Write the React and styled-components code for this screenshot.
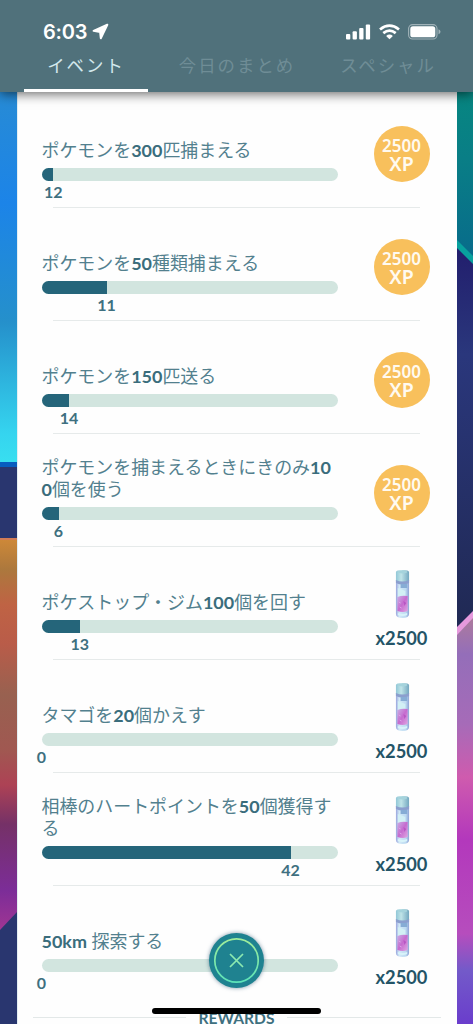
import React from 'react'
import styled, { createGlobalStyle } from 'styled-components'

const GlobalStyle = createGlobalStyle`
  * { box-sizing: border-box; }
  body {
    margin: 0;
    overflow: hidden;
    font-family: Lato, "Noto Sans CJK JP", sans-serif;
  }
`

const Screen = styled.div`
  position: relative;
  width: 473px;
  height: 1024px;
  overflow: hidden;
  display: flex;
  flex-direction: column;
`

const Header = styled.header`
  position: relative;
  z-index: 2;
  height: 92px;
  flex: none;
  background: #50717b;
  box-shadow: 0 2px 11px rgba(0, 0, 0, 0.6);
`

const StatusBar = styled.div`
  display: flex;
  align-items: center;
  height: 50px;
  padding: 13px 32px 0 43px;
  color: #fff;
`

const Time = styled.span`
  font: 600 20px/24px Inter, sans-serif;
  letter-spacing: -0.2px;
  margin-right: 5px;
`

const StatusIcons = styled.div`
  display: flex;
  align-items: center;
  gap: 8px;
  margin-left: auto;
`

const Tabs = styled.nav`
  display: flex;
  gap: 27px;
  height: 42px;
  padding-left: 24px;
`

const Tab = styled.div`
  width: 124px;
  text-align: center;
  font-size: 17.4px;
  line-height: 31px;
  letter-spacing: 2px;
  white-space: nowrap;
  font-weight: 400;
  color: ${props => props.$active ? '#d3e8ed' : '#6f8d96'};
  border-bottom: 3px solid ${props => props.$active ? '#fff' : 'transparent'};
`

const Body = styled.div`
  display: flex;
  flex: 1;
  min-height: 0;
`

const Side = styled.svg`
  display: block;
  flex: none;
`

const Card = styled.main`
  width: 440px;
  height: 932px;
  flex: none;
  padding-top: 3px;
  background: #fefefe;
  border-left: 1px solid #e3eef2;
`

const Task = styled.section`
  display: grid;
  grid-template-columns: 296px 110px;
  column-gap: 9px;
  height: 112px;
  padding-left: 24px;
`

const Info = styled.div`
  display: flex;
  flex-direction: column;
  justify-content: flex-end;
  padding-bottom: 5px;
`

const Title = styled.div`
  font-size: 17.95px;
  line-height: 22px;
  font-weight: 400;
  color: #52808e;
  margin-bottom: 7px;
  word-break: break-all;

  b {
    font-weight: 700;
    color: #3a6d7c;
  }
`

const Track = styled.div`
  height: 13px;
  border-radius: 7px;
  background: #d2e5df;
  overflow: hidden;
`

const Fill = styled.div`
  height: 100%;
  background: #25657a;
`

const Count = styled.div`
  width: 40px;
  height: 21px;
  text-align: center;
  font-size: 16px;
  line-height: 21px;
  font-weight: 700;
  color: #3e7080;
`

const Divider = styled.div`
  height: 1px;
  width: 367px;
  margin-left: 35px;
  background: #e6eaea;
`

const Reward = styled.div`
  display: flex;
  flex-direction: column;
  align-items: center;
`

const XpBadge = styled.div`
  width: 56px;
  height: 56px;
  margin-top: 31px;
  padding-top: 11px;
  border-radius: 50%;
  background: #f8c05c;
  color: #fffaf0;
  text-align: center;
  font-family: "Noto Sans", sans-serif;
  font-size: 17px;
  line-height: 18px;
  font-weight: 600;

  span {
    display: block;
    font-size: 19.5px;
    line-height: 17px;
  }
`

const Vial = styled.svg`
  display: block;
  margin-top: 22px;
  margin-left: 2px;
`

const Amount = styled.div`
  margin-top: 7px;
  font-size: 18.3px;
  line-height: 24px;
  font-weight: 700;
  color: #245467;
`

const RewardsHeading = styled.div`
  display: flex;
  align-items: center;
  gap: 13px;
  height: 22px;
  margin: 9px 16px 0 15px;
  font-size: 15.6px;
  font-weight: 700;
  color: #3e7080;

  &::before,
  &::after {
    content: '';
    flex: 1;
    height: 1px;
    margin-bottom: 1px;
    background: #e3e8e8;
  }
`

const CloseButton = styled.button`
  position: absolute;
  z-index: 3;
  left: 209px;
  top: 933px;
  width: 55px;
  height: 55px;
  padding: 0;
  border: 0;
  border-radius: 50%;
  background: #1f8290;
  box-shadow: 0 0 4px rgba(40, 80, 110, 0.6);

  svg {
    display: block;
  }
`

const HomeIndicator = styled.div`
  position: absolute;
  z-index: 4;
  left: 152px;
  top: 1008px;
  width: 169px;
  height: 6px;
  border-radius: 3px;
  background: #000;
`

const BAR_WIDTH = 296

const tasks = [
  { title: <>ポケモンを<b>300</b>匹捕まえる</>, count: 12, fill: 11.8, xp: true },
  { title: <>ポケモンを<b>50</b>種類捕まえる</>, count: 11, fill: 65, xp: true },
  { title: <>ポケモンを<b>150</b>匹送る</>, count: 14, fill: 27.5, xp: true },
  { title: <>ポケモンを捕まえるときにきのみ<b>10<br />0</b>個を使う</>, count: 6, fill: 17, xp: true },
  { title: <>ポケストップ・ジム<b>100</b>個を回す</>, count: 13, fill: 38.3 },
  { title: <>タマゴを<b>20</b>個かえす</>, count: 0, fill: 0 },
  { title: <>相棒のハートポイントを<b>50</b>個獲得する</>, count: 42, fill: 249 },
  { title: <><b>50km</b> 探索する</>, count: 0, fill: 0 },
]

const Stardust = () => (
  <Vial width="15" height="50" viewBox="0 0 16 50" preserveAspectRatio="none">
    <defs>
      <linearGradient id="glass" x1="0" x2="1">
        <stop offset="0" stopColor="#98a5dd" />
        <stop offset=".25" stopColor="#d2e9f7" />
        <stop offset=".75" stopColor="#bddaf1" />
        <stop offset="1" stopColor="#8ea3d6" />
      </linearGradient>
      <linearGradient id="cap" x1="0" x2="1">
        <stop offset="0" stopColor="#91c7d7" />
        <stop offset=".4" stopColor="#c0e4e8" />
        <stop offset="1" stopColor="#74a8c0" />
      </linearGradient>
      <linearGradient id="dust" x1="0" x2="1" y2="1">
        <stop offset="0" stopColor="#c9b0e6" />
        <stop offset=".5" stopColor="#c66bcf" />
        <stop offset="1" stopColor="#dfa6e2" />
      </linearGradient>
    </defs>
    <path d="M1 11h14v34q0 4-7 4t-7-4z" fill="url(#glass)" />
    <path d="M1 3q0-2 7-2t7 2v9q-7 3-14 0z" fill="url(#cap)" />
    <path d="M1 11q7 3 14 0v3q-7 3-14 0z" fill="#8b9fce" />
    <path d="M6 15h7v4H6z" fill="#86acd5" />
    <path d="M3 19l8 3v6H3z" fill="#d2f0f5" />
    <path d="M2.5 28q5-2 11-1v15q-5 2-11 0z" fill="url(#dust)" />
    <path d="M4 33l2 1M5 38l2 1" stroke="#dda6e8" strokeWidth="1" />
    <path d="M9 32l3 2-2 3" fill="#b856c4" />
    <path d="M3 44q5 2 10 0v2q-5 2-10 0z" fill="#d8f3fa" />
    <ellipse cx="8" cy="3" rx="5" ry="1.4" fill="#a5d3dc" />
  </Vial>
)

const LeftSide = () => (
  <Side width="16.5" height="932" viewBox="0 92 16.5 932">
    <defs>
      <linearGradient id="sky" x2="0" y2="1">
        <stop offset="0" stopColor="#278bd5" />
        <stop offset=".3" stopColor="#1c84e8" />
        <stop offset=".62" stopColor="#2590cb" />
        <stop offset=".92" stopColor="#35d4ef" />
        <stop offset="1" stopColor="#38dff0" />
      </linearGradient>
      <linearGradient id="sunset" x2="0" y2="1">
        <stop offset="0" stopColor="#cf8938" />
        <stop offset=".08" stopColor="#ac783d" />
        <stop offset=".17" stopColor="#bf6344" />
        <stop offset=".27" stopColor="#b95c49" />
        <stop offset=".4" stopColor="#986150" />
        <stop offset=".54" stopColor="#a05851" />
        <stop offset=".63" stopColor="#ad4255" />
        <stop offset=".73" stopColor="#753167" />
        <stop offset=".9" stopColor="#7c2d98" />
        <stop offset="1" stopColor="#a03593" />
      </linearGradient>
    </defs>
    <path d="M0 92h17v371H0z" fill="url(#sky)" />
    <path d="M0 462h17v6H0z" fill="#075dbf" />
    <path d="M0 467h17v557H0z" fill="#29366f" />
    <path d="M0 538h17v374L0 930z" fill="url(#sunset)" />
    <path d="M0 538h17v2H0z" fill="#d17c56" />
  </Side>
)

const RightSide = () => (
  <Side width="17" height="932" viewBox="0 92 17 932">
    <defs>
      <linearGradient id="teal" x2="0" y2="1">
        <stop offset="0" stopColor="#078681" />
        <stop offset=".4" stopColor="#097e86" />
        <stop offset="1" stopColor="#086b8b" />
      </linearGradient>
      <linearGradient id="night" x2="0" y2="1">
        <stop offset="0" stopColor="#221e6d" />
        <stop offset=".28" stopColor="#2a377c" />
        <stop offset="1" stopColor="#202953" />
      </linearGradient>
      <linearGradient id="violet" x2="0" y2="1">
        <stop offset="0" stopColor="#b07c99" />
        <stop offset=".1" stopColor="#946eb9" />
        <stop offset=".27" stopColor="#a66bb8" />
        <stop offset=".4" stopColor="#cf5bae" />
        <stop offset=".55" stopColor="#b338bc" />
        <stop offset=".78" stopColor="#b64dbd" />
        <stop offset=".87" stopColor="#735ac9" />
        <stop offset="1" stopColor="#6a3dcc" />
      </linearGradient>
    </defs>
    <path d="M0 92h17v167L0 242z" fill="url(#teal)" />
    <path d="M0 247l17 17v348L0 630z" fill="url(#night)" />
    <path d="M0 240l17 17v8L0 248z" fill="#08a19e" />
    <path d="M0 630l17-17v411H0z" fill="url(#violet)" />
    <path d="M0 627l17-17v7L0 635z" fill="#e699dd" />
  </Side>
)

const TaskRow = ({ task, last }) => (
  <>
    <Task>
      <Info>
        <Title>{task.title}</Title>
        <Track><Fill style={{ width: `${task.fill / BAR_WIDTH * 100}%` }} /></Track>
        <Count style={{ marginLeft: Math.max(task.fill - 20, -21) }}>{task.count}</Count>
      </Info>
      <Reward>
        {task.xp
          ? <XpBadge>2500<span>XP</span></XpBadge>
          : <><Stardust /><Amount>x2500</Amount></>}
      </Reward>
    </Task>
    {!last && <Divider />}
  </>
)

export default class App extends React.Component {
  render() {
    return (
      <Screen>
        <GlobalStyle />
        <Header>
          <StatusBar>
            <Time>6:03</Time>
            <svg width="17" height="17" viewBox="0 0 17 17">
              <path d="M15.3 1.7L1.6 7.8l6.5 1.1.7 6.3z" fill="#fff" stroke="#fff" strokeWidth="2" strokeLinejoin="round" />
            </svg>
            <StatusIcons>
              <svg width="25" height="16" viewBox="0 0 25 16" fill="#fff">
                <rect x="0" y="10" width="4.3" height="5.4" rx="1" />
                <rect x="6.6" y="7.3" width="4.3" height="8.1" rx="1" />
                <rect x="13.2" y="4" width="4.3" height="11.4" rx="1" />
                <rect x="19.8" y="0.5" width="4.3" height="14.9" rx="1" />
              </svg>
              <svg width="21" height="16" viewBox="0 0 21 16" fill="none" stroke="#fff" strokeWidth="2.8">
                <path d="M1 5.5Q10.5-2.2 20 5.5M4.3 9.1Q10.5 4.2 16.7 9.1" />
                <path d="M7.1 11.9q3.4-2.7 6.8 0l-3.4 3.4z" fill="#fff" stroke="none" />
              </svg>
              <svg width="33" height="16" viewBox="0 0 33 16">
                <rect x=".6" y=".6" width="28.4" height="14.4" rx="4" fill="none" stroke="#a0b2b8" strokeWidth="1.1" />
                <rect x="2.3" y="2.3" width="25" height="11" rx="2.6" fill="#fff" />
                <path d="M30.5 5.3q2 .8 2 2.5t-2 2.5z" fill="#a0b2b8" />
              </svg>
            </StatusIcons>
          </StatusBar>
          <Tabs>
            <Tab $active>イベント</Tab>
            <Tab>今日のまとめ</Tab>
            <Tab>スペシャル</Tab>
          </Tabs>
        </Header>
        <Body>
          <LeftSide />
          <Card>
            {tasks.map((task, index) => (
              <TaskRow key={index} task={task} last={index === tasks.length - 1} />
            ))}
            <RewardsHeading>REWARDS</RewardsHeading>
          </Card>
          <RightSide />
        </Body>
        <CloseButton aria-label="close">
          <svg width="55" height="55" viewBox="1 1 55 55" fill="none">
            <defs>
              <linearGradient id="ring" x2="0" y2="1">
                <stop offset="0" stopColor="#a0ec9a" />
                <stop offset="1" stopColor="#5ce3b8" />
              </linearGradient>
            </defs>
            <circle cx="28.5" cy="28.5" r="21.7" stroke="url(#ring)" strokeWidth="1.7" />
            <path d="M22 22l13 13M35 22L22 35" stroke="#8ce9b0" strokeWidth="1.7" />
          </svg>
        </CloseButton>
        <HomeIndicator />
      </Screen>
    )
  }
}
